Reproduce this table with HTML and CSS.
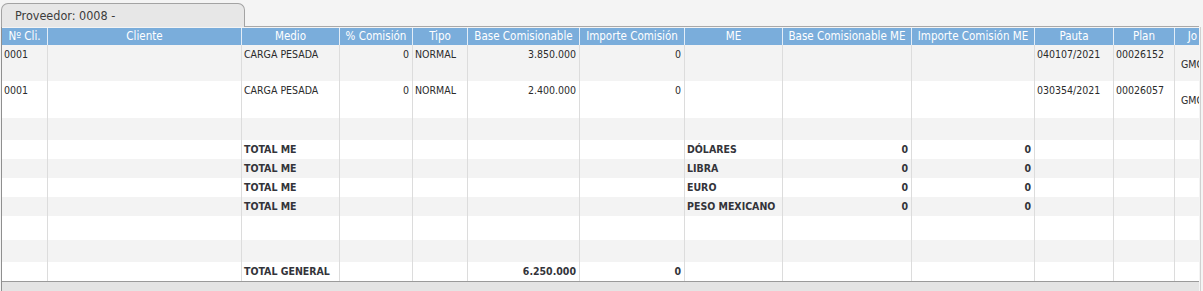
FILE: index.html
```html
<!DOCTYPE html>
<html lang="es">
<head>
<meta charset="utf-8">
<title>Proveedor 0008</title>
<link rel="stylesheet" href="styles.css">
</head>
<body>
<div class="tabs">
  <div class="tab">Proveedor: 0008 -</div>
  <div class="tab-fill"></div>
</div>
<div class="panel">
  <div class="viewport">
    <div class="grid">
      <div class="row head">
        <div class="c">Nº Cli.</div><div class="c">Cliente</div><div class="c">Medio</div><div class="c">% Comisión</div><div class="c">Tipo</div><div class="c">Base Comisionable</div><div class="c">Importe Comisión</div><div class="c">ME</div><div class="c">Base Comisionable ME</div><div class="c">Importe Comisión ME</div><div class="c">Pauta</div><div class="c">Plan</div><div class="c jo">Jo</div>
      </div>
      <div class="row tall odd r1">
        <div class="c">0001</div><div class="c"></div><div class="c">CARGA PESADA</div><div class="c num">0</div><div class="c">NORMAL</div><div class="c num">3.850.000</div><div class="c num">0</div><div class="c"></div><div class="c"></div><div class="c"></div><div class="c">040107/2021</div><div class="c">00026152</div><div class="c mid">GMC</div>
      </div>
      <div class="row tall r2">
        <div class="c">0001</div><div class="c"></div><div class="c">CARGA PESADA</div><div class="c num">0</div><div class="c">NORMAL</div><div class="c num">2.400.000</div><div class="c num">0</div><div class="c"></div><div class="c"></div><div class="c"></div><div class="c">030354/2021</div><div class="c">00026057</div><div class="c mid">GMC</div>
      </div>
      <div class="row odd r3">
        <div class="c"></div><div class="c"></div><div class="c"></div><div class="c"></div><div class="c"></div><div class="c"></div><div class="c"></div><div class="c"></div><div class="c"></div><div class="c"></div><div class="c"></div><div class="c"></div><div class="c"></div>
      </div>
      <div class="row total">
        <div class="c"></div><div class="c"></div><div class="c">TOTAL ME</div><div class="c"></div><div class="c"></div><div class="c"></div><div class="c"></div><div class="c">DÓLARES</div><div class="c num">0</div><div class="c num">0</div><div class="c"></div><div class="c"></div><div class="c"></div>
      </div>
      <div class="row total odd">
        <div class="c"></div><div class="c"></div><div class="c">TOTAL ME</div><div class="c"></div><div class="c"></div><div class="c"></div><div class="c"></div><div class="c">LIBRA</div><div class="c num">0</div><div class="c num">0</div><div class="c"></div><div class="c"></div><div class="c"></div>
      </div>
      <div class="row total">
        <div class="c"></div><div class="c"></div><div class="c">TOTAL ME</div><div class="c"></div><div class="c"></div><div class="c"></div><div class="c"></div><div class="c">EURO</div><div class="c num">0</div><div class="c num">0</div><div class="c"></div><div class="c"></div><div class="c"></div>
      </div>
      <div class="row total odd">
        <div class="c"></div><div class="c"></div><div class="c">TOTAL ME</div><div class="c"></div><div class="c"></div><div class="c"></div><div class="c"></div><div class="c">PESO MEXICANO</div><div class="c num">0</div><div class="c num">0</div><div class="c"></div><div class="c"></div><div class="c"></div>
      </div>
      <div class="row r8">
        <div class="c"></div><div class="c"></div><div class="c"></div><div class="c"></div><div class="c"></div><div class="c"></div><div class="c"></div><div class="c"></div><div class="c"></div><div class="c"></div><div class="c"></div><div class="c"></div><div class="c"></div>
      </div>
      <div class="row odd r9">
        <div class="c"></div><div class="c"></div><div class="c"></div><div class="c"></div><div class="c"></div><div class="c"></div><div class="c"></div><div class="c"></div><div class="c"></div><div class="c"></div><div class="c"></div><div class="c"></div><div class="c"></div>
      </div>
      <div class="row total">
        <div class="c"></div><div class="c"></div><div class="c">TOTAL GENERAL</div><div class="c"></div><div class="c"></div><div class="c num">6.250.000</div><div class="c num">0</div><div class="c"></div><div class="c"></div><div class="c"></div><div class="c"></div><div class="c"></div><div class="c"></div>
      </div>
    </div>
  </div>
  <div class="hscroll"></div>
</div>
</body>
</html>
```

FILE: styles.css
```css
html, body {
  margin: 0;
  padding: 0;
  background: #f4f4f4;
}
body {
  width: 1203px;
  height: 291px;
  overflow: hidden;
  font-family: "DejaVu Sans Condensed", "DejaVu Sans", sans-serif;
  font-stretch: condensed;
  color: #2b2b2b;
}

.tabs {
  display: flex;
  align-items: flex-end;
  height: 27px;
  padding-left: 1px;
  box-sizing: border-box;
}
.tab {
  width: 244px;
  height: 24px;
  box-sizing: border-box;
  border: 1px solid #a3a3a3;
  border-bottom: none;
  border-radius: 7px 7px 0 0;
  background: #e7e7e7;
  color: #3c3c3c;
  font-size: 12.5px;
  line-height: 22px;
  padding-left: 13px;
  padding-top: 1px;
}
.tab-fill {
  width: 954px;
  height: 1px;
  background: #a9a9a9;
}

.panel {
  margin-left: 1px;
  width: 1198px;
  border-left: 1px solid #8f8f8f;
  border-right: 1px solid #d0d0d0;
  padding-top: 1px;
  background: #f4f4f4;
}
.viewport {
  width: 1197px;
  overflow: hidden;
  background: #fff;
  border-bottom: 1px solid #9a9a9a;
}
.grid {
  width: 1240px;
}
.row {
  display: grid;
  grid-template-columns: 46px 194px 98px 73px 55px 112px 105px 98px 129px 123px 79px 61px 36px;
  height: 19px;
  background: #fff;
}
.row.odd {
  background: #f3f3f3;
}
.c {
  box-sizing: border-box;
  border-right: 1px solid #dcdcdc;
  padding: 0 3px 0 2px;
  display: flex;
  align-items: center;
  font-size: 10.5px;
  line-height: 13px;
  white-space: nowrap;
  overflow: hidden;
}
.c.num {
  justify-content: flex-end;
}

.row.head {
  height: 17px;
  background: #7aaddb;
}
.head .c {
  justify-content: center;
  color: #fff;
  font-size: 11.5px;
  border-right-color: #e3edf7;
  padding: 0 2px;
}

.row.tall .c {
  align-items: flex-start;
  padding-top: 3px;
}
.row.tall .c.mid {
  align-items: center;
  padding-top: 2px;
  padding-left: 6px;
}
.row.r1 { height: 36px; }
.row.r2 { height: 37px; }
.row.r3 { height: 22px; }
.row.r8 { height: 24px; }
.row.r9 { height: 22px; }

.row.total .c {
  font-weight: bold;
  color: #33343a;
}

.hscroll {
  height: 9px;
  width: 1197px;
  background: #e4e4e4;
}
```
